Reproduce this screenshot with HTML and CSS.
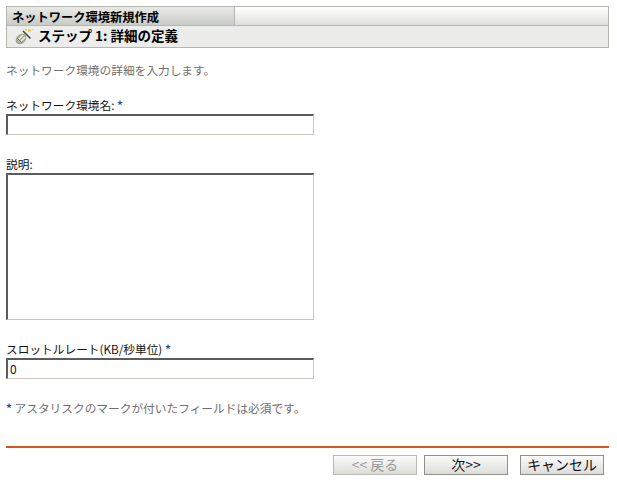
FILE: index.html
```html
<!DOCTYPE html>
<html lang="ja">
<head>
<meta charset="utf-8">
<title>ネットワーク環境新規作成</title>
<link rel="stylesheet" href="styles.css">
</head>
<body>
<div class="wizard-head">
  <div class="tabs">
    <div class="tab-title">ネットワーク環境新規作成</div>
    <div class="tab-rest"></div>
  </div>
  <div class="step">
    <svg class="wand" width="20" height="18" viewBox="0 0 20 18">
      <ellipse cx="6" cy="11" rx="6" ry="4.500" transform="rotate(-45 6 11)" fill="#a4a88c"/>
      <path d="M3 12 L8 7 M5 14 L10 9" stroke="#eef0e2" stroke-width="1.500"/>
      <path d="M2 10 L7 15" stroke="#6f7359" stroke-width="1"/>
      <path d="M8 3 L15.500 10.500" stroke="#3f3f38" stroke-width="1.500"/>
      <path d="M10 2 H12 M14 1 V4 M13 2.500 H16 M17 1 V2" stroke="#e0c040" stroke-width="1"/>
    </svg>
    <span>ステップ 1: 詳細の定義</span>
  </div>
</div>
<p class="intro">ネットワーク環境の詳細を入力します。</p>
<form class="form">
  <div class="field field-name">
    <label class="label" for="name">ネットワーク環境名: <span class="req">*</span></label>
    <input class="input" id="name" type="text">
  </div>
  <div class="field field-desc">
    <label class="label" for="desc">説明:</label>
    <textarea class="input area" id="desc"></textarea>
  </div>
  <div class="field field-rate">
    <label class="label" for="rate">スロットルレート(KB/秒単位) <span class="req">*</span></label>
    <input class="input" id="rate" type="text" value="0">
  </div>
  <p class="note"><span class="req">*</span> アスタリスクのマークが付いたフィールドは必須です。</p>
</form>
<div class="footer">
  <button class="btn" type="button" disabled>&lt;&lt; 戻る</button>
  <button class="btn" type="button">次&gt;&gt;</button>
  <button class="btn btn-cancel" type="button">キャンセル</button>
</div>
</body>
</html>
```
FILE: styles.css
```css
html, body {
  margin: 0;
  padding: 0;
  background: #fff;
}
body {
  width: 617px;
  height: 484px;
  overflow: hidden;
  padding: 6px 8px 0 6px;
  box-sizing: border-box;
  font-family: "Noto Sans CJK JP", "Liberation Sans", sans-serif;
  font-size: 11.7px;
  line-height: 16px;
  color: #000;
}
.wizard-head {
  border: 1px solid #b5b6ae;
  height: 42px;
  box-sizing: border-box;
  background: #ecedeb;
}
.tabs {
  display: flex;
  height: 18px;
  border-bottom: 1px solid #b5b6ae;
}
.tab-title {
  width: 228px;
  padding-left: 5px;
  box-sizing: border-box;
  font-size: 12.25px;
  font-weight: 700;
  line-height: 20px;
  background: linear-gradient(#e9eae7, #c9cbc6);
  border-right: 1px solid #b5b6ae;
}
.tab-rest {
  flex: 1;
  background: linear-gradient(#ffffff, #dfe0dc);
}
.step {
  display: flex;
  align-items: center;
  height: 21px;
  padding-left: 8px;
  font-weight: 700;
  font-size: 13.5px;
  line-height: 18px;
}
.step span {
  margin-top: -4px;
}
.wand {
  margin-right: 3px;
}
.intro {
  margin: 14px 0 0;
  color: #6f6f6f;
}
.form {
  margin: 0;
}
.field {
  display: flex;
  flex-direction: column;
  width: 308px;
}
.field-name { margin-top: 19px; }
.field-desc { margin-top: 21px; }
.field-rate { margin-top: 21px; }
.label {
  height: 16px;
  margin-bottom: 1px;
  color: #111;
}
.req {
  color: #1d55a8;
  font-weight: 700;
}
.input {
  display: block;
  width: 308px;
  height: 21px;
  margin: 0;
  padding: 0 2px 2px;
  box-sizing: border-box;
  border-style: solid;
  border-width: 2px 1px 1px 2px;
  border-color: #5c5c5c #c9c7c0 #c9c7c0 #5c5c5c;
  border-radius: 0;
  outline: 0;
  background: #fff;
  font-family: "Noto Sans CJK JP", "Liberation Sans", sans-serif;
  font-size: 12px;
  color: #111;
}
.area {
  height: 147px;
  resize: none;
}
.note {
  margin: 21px 0 0;
  color: #6f6f6f;
}
.footer {
  display: flex;
  justify-content: flex-end;
  gap: 7px;
  margin-top: 30px;
  padding: 7px 5px 0 0;
  border-top: 2px solid #d4581c;
}
.btn {
  width: 84px;
  height: 20px;
  padding: 0 0 2px;
  box-sizing: border-box;
  border: 1px solid #8f908a;
  border-radius: 0;
  background: linear-gradient(#fbfbfa, #dcddd9);
  font-family: "Noto Sans CJK JP", "Liberation Sans", sans-serif;
  font-size: 14px;
  line-height: 16px;
  color: #111;
}
.btn:disabled {
  border-color: #b9bab4;
  color: #9a9a9a;
}
.btn-cancel {
  margin-left: 5px;
}
```
